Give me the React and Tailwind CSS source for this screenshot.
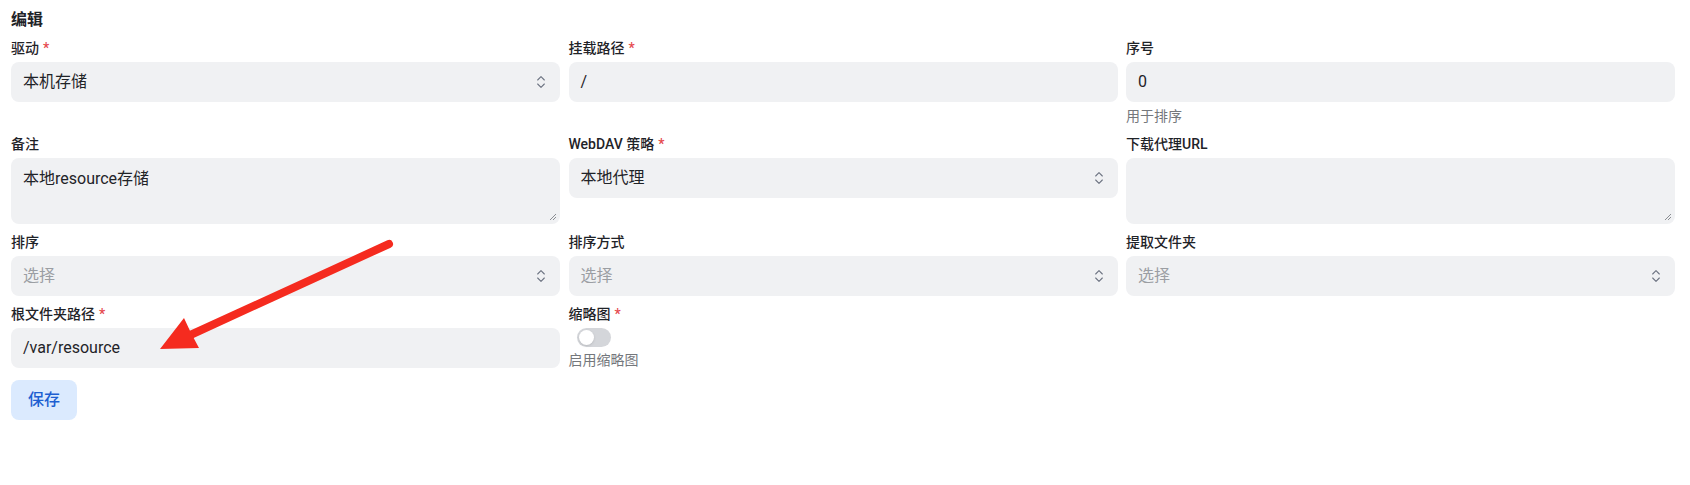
import React from "react";

const Chevron = () => (
  <svg width="16" height="16" viewBox="0 0 24 24" fill="none" stroke="#6b7280" strokeWidth="1.6" strokeLinecap="round" strokeLinejoin="round" className="shrink-0">
    <path d="m7 15 5 5 5-5" />
    <path d="m7 9 5-5 5 5" />
  </svg>
);

const Req = () => <span className="text-[#e5484d] ml-1">*</span>;

const Label = ({ children, req }) => (
  <div className="h-5 leading-5 text-sm font-medium text-[#1f2328]">
    {children}
    {req && <Req />}
  </div>
);

const Select = ({ value, placeholder }) => (
  <div className="mt-1 h-10 rounded-lg bg-[#f0f1f3] flex items-center justify-between pl-3 pr-[11px]">
    <span className={value ? "text-base text-[#1f2328]" : "text-base text-[#9b9ea3]"}>{value || placeholder}</span>
    <Chevron />
  </div>
);

const Input = ({ value }) => (
  <div className="mt-1 h-10 rounded-lg bg-[#f0f1f3] flex items-center px-3">
    <span className="text-base text-[#1f2328]">{value}</span>
  </div>
);

const TextArea = ({ value }) => (
  <div className="mt-1 h-[66px] rounded-lg bg-[#f0f1f3] px-3 py-[9px] relative">
    <span className="text-base leading-6 text-[#1f2328]">{value}</span>
    <svg width="8" height="8" viewBox="0 0 8 8" className="absolute right-[3px] bottom-[3px]" stroke="#8a8d92" strokeWidth="1">
      <path d="M7 1 1 7M7 4 4 7" />
    </svg>
  </div>
);

const Help = ({ children }) => (
  <div className="mt-1 h-5 leading-5 text-sm text-[#74777c]">{children}</div>
);

export default function App() {
  return (
    <div className="relative w-[1690px] h-[485px] bg-white font-['Roboto','Noto_Sans_CJK_SC',sans-serif] pl-[11px] pr-[15px] pt-2">
      <div className="h-6 leading-6 text-base font-bold text-[#1f2328] mb-[6px]">编辑</div>
      <div className="grid grid-cols-3 gap-x-[8.5px] gap-y-2">
        <div>
          <Label req>驱动</Label>
          <Select value="本机存储" />
        </div>
        <div>
          <Label req>挂载路径</Label>
          <Input value="/" />
        </div>
        <div>
          <Label>序号</Label>
          <Input value="0" />
          <Help>用于排序</Help>
        </div>

        <div>
          <Label>备注</Label>
          <TextArea value="本地resource存储" />
        </div>
        <div>
          <Label req>WebDAV 策略</Label>
          <Select value="本地代理" />
        </div>
        <div>
          <Label>下载代理URL</Label>
          <TextArea value="" />
        </div>

        <div>
          <Label>排序</Label>
          <Select placeholder="选择" />
        </div>
        <div>
          <Label>排序方式</Label>
          <Select placeholder="选择" />
        </div>
        <div>
          <Label>提取文件夹</Label>
          <Select placeholder="选择" />
        </div>

        <div>
          <Label req>根文件夹路径</Label>
          <Input value="/var/resource" />
        </div>
        <div>
          <Label req>缩略图</Label>
          <div className="mt-1 ml-[8px] w-[34px] h-[19px] rounded-full bg-[#d4d6da] p-[2px] flex items-center">
            <div className="w-[15px] h-[15px] rounded-full bg-white shadow-sm" />
          </div>
          <div className="mt-[3px] h-5 leading-5 text-sm text-[#74777c]">启用缩略图</div>
        </div>
        <div />
      </div>
      <button className="mt-[10px] h-10 w-[66px] rounded-lg bg-[#dbeafe] text-base text-[#1d5fd1] font-medium">保存</button>

      <svg className="absolute left-0 top-0 pointer-events-none" width="1690" height="485">
        <line x1="389" y1="244" x2="186" y2="337" stroke="#f52b1f" strokeWidth="8" strokeLinecap="round" />
        <polygon points="160,349 184,318 191,333 199,348" fill="#f52b1f" />
      </svg>
    </div>
  );
}
